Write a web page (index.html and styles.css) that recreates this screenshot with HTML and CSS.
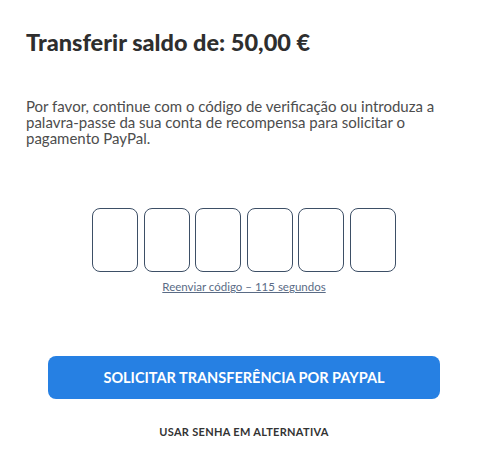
FILE: index.html
```html
<!DOCTYPE html>
<html>
<head>
    <title>Transferir saldo</title>
    <link rel="stylesheet" href="styles.css">
</head>
<body>
    <div class="container">
        <h1>Transferir saldo de: 50,00 €</h1>
        <p class="info">Por favor, continue com o código de verificação ou introduza a palavra-passe da sua conta de recompensa para solicitar o pagamento PayPal.</p>

        <div class="code">
            <div class="code-boxes">
                <input type="text" maxlength="1" class="digit">
                <input type="text" maxlength="1" class="digit">
                <input type="text" maxlength="1" class="digit">
                <input type="text" maxlength="1" class="digit">
                <input type="text" maxlength="1" class="digit">
                <input type="text" maxlength="1" class="digit">
            </div>
            <a href="#" class="resend">Reenviar código – 115 segundos</a>
        </div>

        <button class="btn-primary">SOLICITAR TRANSFERÊNCIA POR PAYPAL</button>
        <a href="#" class="alt-link">USAR SENHA EM ALTERNATIVA</a>
    </div>
</body>
</html>
```

FILE: styles.css
```css
body {
    margin: 0;
    background: #fff;
    font-family: Lato, "Open Sans", sans-serif;
    color: #333;
}

.container {
    padding: 28px 26px 20px;
}

h1 {
    font-size: 23.5px;
    font-weight: 900;
    line-height: 28px;
    margin: 0;
    color: #2e2e2e;
}

.info {
    font-size: 15px;
    line-height: 16px;
    color: #4d4d4d;
    margin: 42px 0 0;
}

.code {
    display: flex;
    flex-direction: column;
    align-items: center;
    margin-top: 62px;
}

.code-boxes {
    display: flex;
    gap: 5.5px;
}

.digit {
    width: 46px;
    height: 64px;
    box-sizing: border-box;
    border: 1px solid #3d4f66;
    border-radius: 8px;
    padding: 0;
    background: #fff;
}

.resend {
    margin-top: 8px;
    font-size: 11.5px;
    color: #5a6b85;
    text-decoration: underline;
}

.btn-primary {
    display: block;
    width: 392px;
    height: 43px;
    margin: 63px auto 0;
    border: none;
    border-radius: 8px;
    background-color: #2680e3;
    color: #fff;
    font-family: inherit;
    font-size: 14.5px;
    font-weight: bold;
}

.alt-link {
    display: block;
    text-align: center;
    margin-top: 26px;
    font-size: 11px;
    font-weight: bold;
    letter-spacing: 0.3px;
    color: #333;
    text-decoration: none;
}
```
